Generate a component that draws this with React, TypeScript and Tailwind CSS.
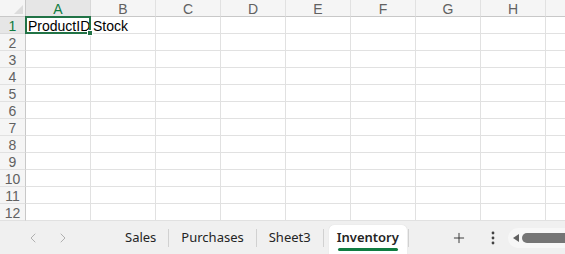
import { ChevronLeft, ChevronRight, Plus } from 'lucide-react';

const columns = ['A', 'B', 'C', 'D', 'E', 'F', 'G', 'H', 'I'];
const rows = Array.from({ length: 12 }, (_, i) => i + 1);
const sheets = ['Sales', 'Purchases', 'Sheet3'];

const cellData: Record<string, string> = {
  A1: 'ProductID',
  B1: 'Stock',
};

export default function App() {
  return (
    <div
      className="flex h-[254px] w-[565px] flex-col overflow-hidden bg-white"
      style={{ fontFamily: '"Liberation Sans", Arial, sans-serif' }}
    >
      {/* sheet grid */}
      <div className="grid h-[221px] w-[565px] grid-cols-[26px_repeat(9,65px)] grid-rows-[17px_repeat(12,17px)] overflow-hidden">
        <div className="relative border-r border-b border-[#c8c8c8] bg-[#f5f5f5]">
          <div className="absolute right-[2px] bottom-[2px] h-0 w-0 border-b-[9px] border-l-[9px] border-b-[#dcdcdc] border-l-transparent" />
        </div>
        {columns.map((c) => (
          <div
            key={c}
            className={`flex items-center justify-center border-r border-b pt-px text-[14px] leading-none ${
              c === 'A'
                ? 'border-r-[#d8d8d8] border-b-[#107c41] bg-[#e6e6e6] text-[#107c41]'
                : 'border-r-[#e1e1e1] border-b-[#c8c8c8] bg-[#f5f5f5] text-[#616161]'
            }`}
          >
            {c === 'I' ? '' : c}
          </div>
        ))}
        {rows.map((r) => (
          <Row key={r} r={r} />
        ))}
      </div>

      {/* sheet tabs bar */}
      <div
        className="flex flex-1 items-stretch bg-[#f0f0f0] text-[13px] text-[#242424]"
        style={{ fontFamily: '"Noto Sans", "Open Sans", sans-serif' }}
      >
        <div className="flex w-[96px] items-center gap-[14px] pl-[25px] text-[#a6a6a6]">
          <ChevronLeft className="h-[16px] w-[16px]" strokeWidth={1.3} />
          <ChevronRight className="h-[16px] w-[16px]" strokeWidth={1.3} />
        </div>
        <div className="flex items-center pl-[17px]">
          {sheets.map((s) => (
            <div key={s} className="flex items-center">
              <span className="px-[12px]">{s}</span>
              <span className="h-[18px] w-px bg-[#d1d1d1]" />
            </div>
          ))}
          <div className="mt-[4px] ml-[5px] flex h-[29px] flex-col items-center self-end rounded-t-[5px] bg-white px-[8px] shadow-[0_0_1px_rgba(0,0,0,0.15)]">
            <span className="pt-[2px] font-semibold leading-[20px]">Inventory</span>
            <span className="mt-[1px] h-[3px] w-[60px] rounded-full bg-[#107c41]" />
          </div>
          <span className="ml-[1px] h-[18px] w-px bg-[#d1d1d1]" />
        </div>
        <div className="ml-[42px] flex items-center text-[#242424]">
          <Plus className="h-[16px] w-[16px]" strokeWidth={1.3} />
        </div>
        <div className="ml-[24px] flex items-center">
          <svg width="4" height="14" viewBox="0 0 4 14">
            <circle cx="2" cy="2" r="1.4" fill="#424242" />
            <circle cx="2" cy="7" r="1.4" fill="#424242" />
            <circle cx="2" cy="12" r="1.4" fill="#424242" />
          </svg>
        </div>
        <div className="ml-[13px] flex flex-1 items-center">
          <div className="flex h-[20px] flex-1 items-center rounded-l-full bg-[#f7f7f7] pl-[5px]">
            <svg width="6" height="8" viewBox="0 0 6 8">
              <path d="M6 0 L0 4 L6 8 Z" fill="#616161" />
            </svg>
            <div className="ml-[3px] h-[10px] flex-1 rounded-l-full bg-[#757575]" />
          </div>
        </div>
      </div>
    </div>
  );
}

function Row({ r }: { r: number }) {
  const selected = r === 1;
  return (
    <>
      <div
        className={`flex items-center justify-center border-r border-b border-r-[#c8c8c8] pt-[2px] text-[14px] leading-none ${
          selected ? 'border-b-[#d8d8d8] bg-[#e6e6e6] text-[#107c41]' : 'border-b-[#e1e1e1] bg-[#f5f5f5] text-[#616161]'
        }`}
      >
        {r}
      </div>
      {columns.map((c) => {
        const key = `${c}${r}`;
        const isActive = key === 'A1';
        return (
          <div
            key={key}
            className="relative flex items-center border-r border-b border-[#e1e1e1] pt-[2px] pl-[2px] text-[14px] leading-none text-black"
          >
            {cellData[key] && <span className="relative z-10">{cellData[key]}</span>}
            {isActive && (
              <div className="absolute -top-px -right-px -bottom-px -left-px z-20 border-2 border-[#217346]">
                <div className="absolute -right-[4px] -bottom-[4px] h-[6px] w-[6px] border border-white bg-[#217346]" />
              </div>
            )}
          </div>
        );
      })}
    </>
  );
}
